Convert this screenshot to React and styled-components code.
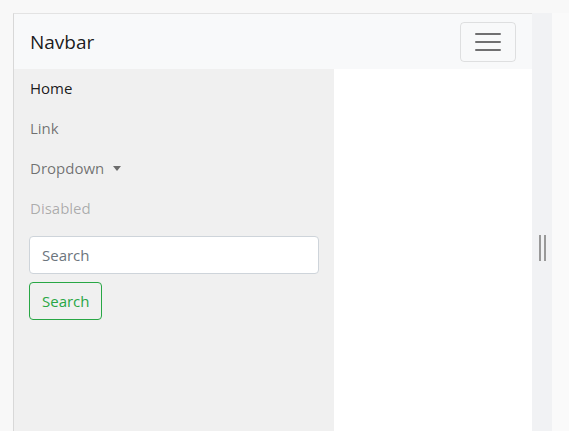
import React from 'react'
import styled, { createGlobalStyle } from 'styled-components'

const GlobalStyle = createGlobalStyle`
  html, body {
    margin: 0;
    padding: 0;
    background: #f8f8f8;
    font-family: "Open Sans", "Noto Sans", sans-serif;
    overflow: hidden;
  }
`

const Page = styled.div`
  display: flex;
  padding: 13px 0 0 13px;
  height: 431px;
  box-sizing: border-box;
`

const Frame = styled.div`
  width: 519px;
  display: flex;
  flex-direction: column;
  border-top: 1px solid #e3e3e3;
  border-left: 1px solid #d8d8d8;
  box-sizing: border-box;
`

const Navbar = styled.nav`
  height: 55px;
  flex-shrink: 0;
  background: #f8f9fa;
  display: flex;
  align-items: center;
  justify-content: space-between;
  padding: 0 16px;
`

const Brand = styled.a`
  font-size: 19px;
  color: rgba(0, 0, 0, 0.9);
  padding-top: 1px;
`

const Toggler = styled.button`
  width: 56px;
  height: 40px;
  margin-top: 1px;
  background: transparent;
  border: 1px solid rgba(0, 0, 0, 0.1);
  border-radius: 4px;
  display: flex;
  align-items: center;
  justify-content: center;
  padding: 0;
`

const Body = styled.div`
  flex: 1;
  display: flex;
`

const Collapse = styled.div`
  width: 320px;
  background: #f0f0f0;
  padding: 0 15px;
  box-sizing: border-box;
`

const NavLink = styled.a`
  display: flex;
  align-items: center;
  height: 40px;
  box-sizing: border-box;
  padding: 0 0 2px 1px;
  font-size: 15px;
  color: ${p => p.$tone === 'active' ? 'rgba(0,0,0,.9)' : p.$tone === 'disabled' ? 'rgba(0,0,0,.3)' : 'rgba(0,0,0,.55)'};
`

const Caret = styled.span`
  margin-left: 9px;
  width: 0;
  height: 0;
  border-left: 4.5px solid transparent;
  border-right: 4.5px solid transparent;
  border-top: 5px solid rgba(0, 0, 0, 0.55);
`

const Form = styled.form`
  display: flex;
  flex-direction: column;
  align-items: flex-start;
  gap: 8px;
  margin-top: 7px;
`

const Input = styled.input`
  width: 290px;
  height: 38px;
  box-sizing: border-box;
  border: 1px solid #ced4da;
  border-radius: 4px;
  background: #fff;
  padding: 0 12px;
  font-family: inherit;
  font-size: 15px;
  color: #212529;
  &::placeholder { color: #6c757d; }
`

const OutlineButton = styled.button`
  height: 38px;
  padding: 0 11px 0 12px;
  background: transparent;
  border: 1px solid #28a745;
  border-radius: 4px;
  color: #28a745;
  font-family: inherit;
  font-size: 15px;
`

const Main = styled.div`
  flex: 1;
  background: #fff;
`

const Resizer = styled.div`
  width: 20px;
  background: #f1f2f4;
  display: flex;
  justify-content: center;
  padding-top: 222px;
  box-sizing: border-box;
`

const Grip = styled.div`
  width: 3px;
  height: 26px;
  border-left: 2px solid #999;
  border-right: 2px solid #999;
`

const Rest = styled.div`
  flex: 1;
  background: #fafafa;
`

const Burger = () => (
  <svg width="26" height="20" viewBox="0 0 26 20">
    <path d="M1 2h24M1 10h24M1 18h24" stroke="rgba(0,0,0,.55)" strokeWidth="2" strokeLinecap="round" />
  </svg>
)

export default function App() {
  return (
    <>
      <GlobalStyle />
      <Page>
        <Frame>
          <Navbar>
            <Brand>Navbar</Brand>
            <Toggler><Burger /></Toggler>
          </Navbar>
          <Body>
            <Collapse>
              <NavLink $tone="active">Home</NavLink>
              <NavLink>Link</NavLink>
              <NavLink>Dropdown<Caret /></NavLink>
              <NavLink $tone="disabled">Disabled</NavLink>
              <Form onSubmit={e => e.preventDefault()}>
                <Input placeholder="Search" />
                <OutlineButton type="submit">Search</OutlineButton>
              </Form>
            </Collapse>
            <Main />
          </Body>
        </Frame>
        <Resizer><Grip /></Resizer>
        <Rest />
      </Page>
    </>
  )
}
